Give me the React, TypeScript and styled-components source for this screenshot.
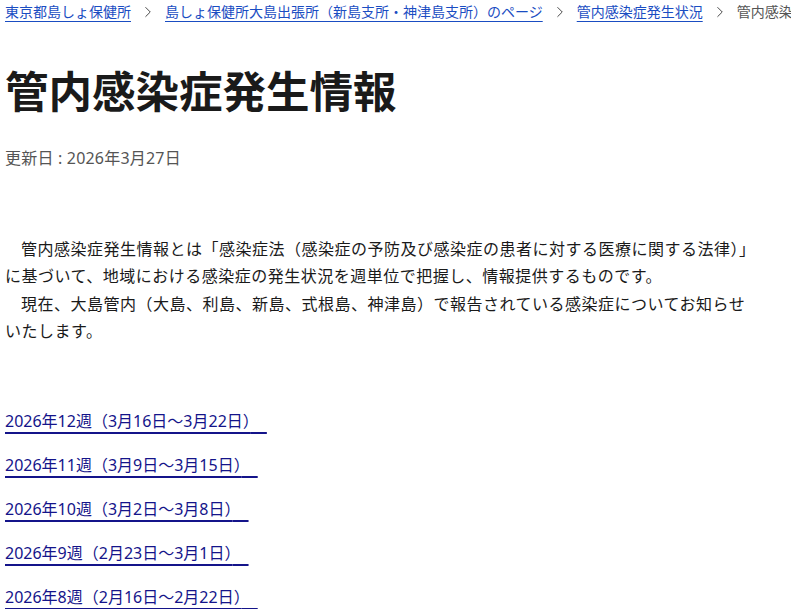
import styled, { createGlobalStyle } from "styled-components";
import { ChevronRight } from "lucide-react";

const GlobalStyle = createGlobalStyle`
    body {
        margin: 0;
        background: #fff;
        font-family: "Noto Sans", "Noto Sans CJK JP", sans-serif;
        color: #1a1a1a;
    }
`;

const Page = styled.div`
    padding: 0 0 0 5px;
    overflow: hidden;
`;

const Breadcrumb = styled.nav`
    display: flex;
    align-items: center;
    gap: 8px;
    height: 24px;
    white-space: nowrap;
    font-size: 14px;
    line-height: 24px;
`;

const Crumb = styled.a`
    color: #1a4dc2;
    text-decoration: underline;
    text-underline-offset: 4px;
    text-decoration-thickness: 1px;
`;

const Current = styled.span`
    color: #555;
`;

const Sep = styled(ChevronRight)`
    color: #444;
    flex-shrink: 0;
`;

const Title = styled.h1`
    margin: 37px 0 0;
    font-size: 43.5px;
    line-height: 60px;
    font-weight: 700;
    color: #1a1a1a;
`;

const Updated = styled.p`
    margin: 25px 0 0;
    font-size: 16px;
    line-height: 24px;
    letter-spacing: 0.2px;
    color: #555;
`;

const Lead = styled.div`
    margin-top: 66px;
    width: 755px;
    font-size: 16px;
    line-height: 27.3px;
    letter-spacing: 0.5px;
    color: #1a1a1a;
    p {
        margin: 0;
        text-indent: 1em;
    }
`;

const WeekList = styled.ul`
    list-style: none;
    margin: 64px 0 0;
    padding: 0;
    display: flex;
    flex-direction: column;
    gap: 20px;
`;

const WeekLink = styled.a`
    display: inline-block;
    font-size: 16px;
    line-height: 24px;
    color: #14148a;
    text-decoration: underline;
    text-underline-offset: 5px;
    text-decoration-thickness: 2px;
`;

const weeks = [
    "2026年12週（3月16日～3月22日）",
    "2026年11週（3月9日～3月15日）",
    "2026年10週（3月2日～3月8日）",
    "2026年9週（2月23日～3月1日）",
    "2026年8週（2月16日～2月22日）",
];

const App = () => {
    return (
        <Page>
            <GlobalStyle />
            <Breadcrumb>
                <Crumb href="#">東京都島しょ保健所</Crumb>
                <Sep size={18} strokeWidth={1.3} />
                <Crumb href="#">島しょ保健所大島出張所（新島支所・神津島支所）のページ</Crumb>
                <Sep size={18} strokeWidth={1.3} />
                <Crumb href="#">管内感染症発生状況</Crumb>
                <Sep size={18} strokeWidth={1.3} />
                <Current>管内感染症発生情報</Current>
            </Breadcrumb>
            <Title>管内感染症発生情報</Title>
            <Updated>更新日 : 2026年3月27日</Updated>
            <Lead>
                <p>
                    管内感染症発生情報とは「感染症法（感染症の予防及び感染症の患者に対する医療に関する法律）」に基づいて、地域における感染症の発生状況を週単位で把握し、情報提供するものです。
                </p>
                <p>
                    現在、大島管内（大島、利島、新島、式根島、神津島）で報告されている感染症についてお知らせいたします。
                </p>
            </Lead>
            <WeekList>
                {weeks.map((w) => (
                    <li key={w}>
                        <WeekLink href="#">{w}　</WeekLink>
                    </li>
                ))}
            </WeekList>
        </Page>
    );
};

export default App;
